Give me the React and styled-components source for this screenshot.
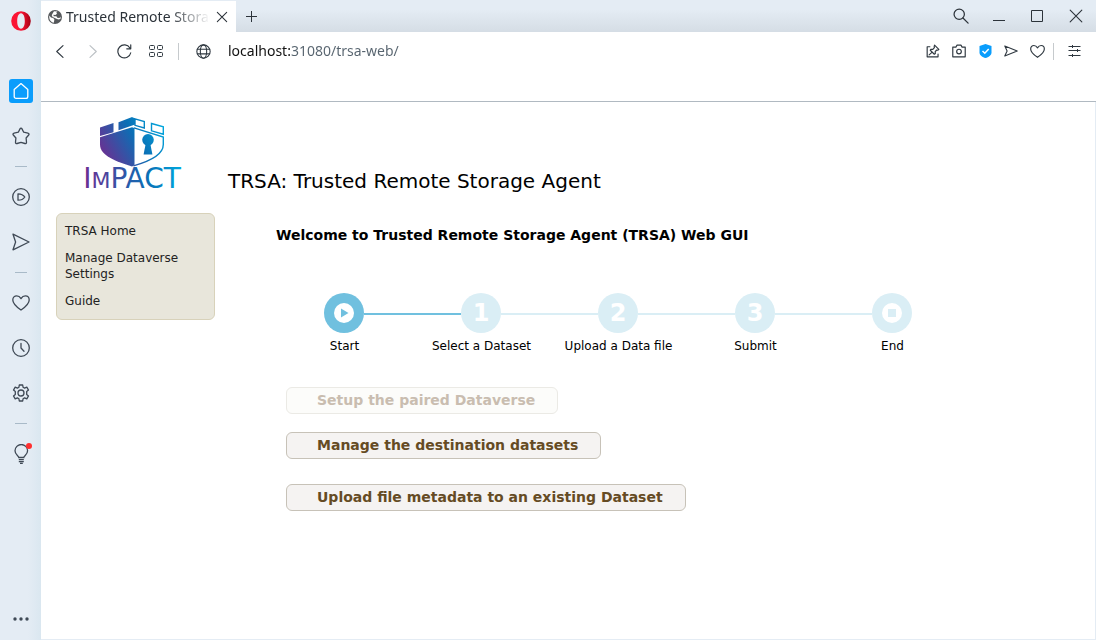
import React from 'react';
import styled, { createGlobalStyle } from 'styled-components';

const GlobalStyle = createGlobalStyle`
  *, *::before, *::after { box-sizing: border-box; }
  body {
    margin: 0;
    background: #ffffff;
    color: #000000;
    font-family: "DejaVu Sans", sans-serif;
    font-size: 12px;
  }
  button, input { font: inherit; color: inherit; }
`;

const chromeFont = '"Noto Sans", "Open Sans", sans-serif';

const Window = styled.div`
  display: flex;
  min-height: 100vh;
  background: #e4ecf4;
`;

const Sidebar = styled.nav`
  display: flex;
  flex: none;
  flex-direction: column;
  align-items: center;
  width: 41px;
  padding: 9px 0;
  background: linear-gradient(to right, #e4ecf4 28px, #dae7f0);
  color: #3f4955;
`;

const SideGroup = styled.div`
  display: flex;
  flex-direction: column;
  gap: 21px;
`;

const SideButton = styled.button`
  position: relative;
  display: grid;
  place-items: center;
  width: 24px;
  height: 24px;
  padding: 0;
  border: 0;
  border-radius: 3px;
  background: ${(p) => (p.$active ? '#0a9dfc' : 'transparent')};
  color: ${(p) => (p.$active ? '#ffffff' : 'inherit')};
`;

const OperaButton = styled(SideButton)`
  margin-bottom: 46px;
`;

const MoreButton = styled(SideButton)`
  margin-top: auto;
`;

const SideDivider = styled.hr`
  width: 12px;
  height: 1px;
  margin: 18px 0;
  border: 0;
  background: #a9bac8;
`;

const Alert = styled.span`
  position: absolute;
  top: 1px;
  right: 1px;
  width: 6px;
  height: 6px;
  border-radius: 50%;
  background: #ff2f2f;
`;

const Frame = styled.div`
  display: flex;
  flex: 1;
  flex-direction: column;
  min-width: 0;
`;

const TabBar = styled.div`
  display: flex;
  align-items: stretch;
  height: 32px;
  padding-top: 1px;
  padding-right: 1px;
  background: linear-gradient(#e4ecf4 30%, #d5dde5);
  color: #2c333a;
`;

const Tab = styled.div`
  display: flex;
  align-items: center;
  width: 195px;
  padding: 0 7px;
  background: #ffffff;
  font: 14px/20px ${chromeFont};
`;

const TabTitle = styled.span`
  flex: 1;
  min-width: 0;
  margin-left: 4px;
  overflow: hidden;
  white-space: nowrap;
  mask-image: linear-gradient(to right, #000 104px, transparent 144px);
`;

const BarButton = styled.button`
  display: grid;
  flex: none;
  place-items: center;
  width: ${(p) => p.$width || 26}px;
  height: 30px;
  padding: 0;
  border: 0;
  background: none;
  color: ${(p) => (p.$muted ? '#bcc1c5' : 'inherit')};
`;

const WindowControls = styled.div`
  display: flex;
  margin-left: auto;
`;

const Toolbar = styled.div`
  display: flex;
  align-items: center;
  height: 38px;
  padding: 0 9px 0 3px;
  background: #ffffff;
  color: #2f3840;
`;

const ToolbarDivider = styled.span`
  flex: none;
  width: 1px;
  height: 17px;
  margin: 0 ${(p) => p.$right}px 0 ${(p) => p.$left}px;
  background: #c6cacd;
`;

const Address = styled.input`
  flex: 1;
  min-width: 0;
  height: 24px;
  margin-left: 9px;
  padding: 0 0 2px;
  border: 0;
  outline: 0;
  font: 14px/20px ${chromeFont};
  color: #111111;
  background: linear-gradient(to right, #111111 62px, #56636e 62px);
  background-clip: text;
  -webkit-text-fill-color: transparent;
`;

const BookmarksBar = styled.div`
  height: 32px;
  border-bottom: 1px solid #b0b9c1;
  background: #ffffff;
`;

const Page = styled.div`
  flex: 1;
  margin: 0 1px 1px 0;
  padding: 15px;
  background: #ffffff;
`;

const PageHeader = styled.header`
  display: flex;
  align-items: flex-end;
  gap: 20px;
  margin-bottom: 24px;
`;

const LogoImage = styled.svg`
  flex: none;
  overflow: visible;
`;

const AppTitle = styled.h1`
  margin: 0 0 -4px;
  font-size: 20px;
  font-weight: 400;
  line-height: 24px;
`;

const Columns = styled.div`
  display: flex;
  align-items: flex-start;
  gap: 61px;
`;

const Menu = styled.ul`
  display: flex;
  flex: none;
  flex-direction: column;
  gap: 11px;
  width: 159px;
  margin: 0;
  padding: 9px 8px 10px;
  border: 1px solid #d8d2ba;
  border-radius: 6px;
  background: #e8e6db;
  list-style: none;
`;

const MenuLink = styled.a`
  display: block;
  color: #222222;
  line-height: 16px;
  text-decoration: none;
`;

const Main = styled.main`
  flex: 1;
  min-width: 0;
  padding-top: 12px;
`;

const Welcome = styled.h2`
  margin: 0 0 48px;
  font-size: 14px;
  font-weight: 700;
  line-height: 20px;
`;

const Steps = styled.ol`
  display: flex;
  margin: 0 0 33px;
  padding: 0;
  list-style: none;
`;

const Step = styled.li`
  flex: none;
  width: 137px;
`;

const StepTrack = styled.div`
  display: flex;
  align-items: center;
`;

const Line = styled.span`
  width: ${(p) => p.$width}px;
  height: 2px;
  margin-top: 2px;
  background: ${(p) => p.$color};
`;

const Bullet = styled.span`
  display: grid;
  place-items: center;
  width: 40px;
  height: 40px;
  border-radius: 50%;
  background: ${(p) => (p.$active ? '#70c0df' : '#daeef5')};
  color: #ffffff;
  font-size: 24px;
  font-weight: 700;
  line-height: 40px;
`;

const StepLabel = styled.div`
  margin-top: 5px;
  line-height: 16px;
  text-align: center;
`;

const Actions = styled.div`
  display: flex;
  flex-direction: column;
  align-items: flex-start;
  gap: 18px;
  padding-left: 10px;
`;

const ActionButton = styled.button`
  height: 27px;
  margin: 0;
  margin-top: ${(p) => (p.$spaced ? 7 : 0)}px;
  padding: 0 22px 1px 30px;
  border: 1px solid #c7c2b8;
  border-radius: 6px;
  background: #f5f3f2;
  color: #654b24;
  font-size: 14px;
  font-weight: 700;
  line-height: 20px;
  white-space: nowrap;

  &:disabled {
    border-color: #ebeae5;
    background: #fcfcfa;
    color: #c9bdb0;
  }
`;

function Icon({ size = 18, width = 1.3, children }) {
  return (
    <svg width={size} height={size} viewBox="0 0 18 18" fill="none" stroke="currentColor"
      strokeWidth={width} strokeLinejoin="round" strokeLinecap="round" aria-hidden="true">
      {children}
    </svg>
  );
}

const heart = 'M9 16C5 13.2.8 9.6.8 5.9.8 3.400 2.600 1.800 4.700 1.800 6.600 1.800 8 2.900 9 4.600 10 2.900 11.400 1.800 13.300 1.800 15.400 1.800 17.200 3.400 17.200 5.900 17.200 9.600 13 13.200 9 16Z';
const plane = 'M1 1.200 17 9 1 16.800 3.600 9Z';

function OperaLogo() {
  return (
    <svg width="20" height="20" viewBox="0 0 20 20" aria-hidden="true">
      <defs>
        <linearGradient id="opera" x1="0" x2="1">
          <stop offset="0.5" stopColor="#fb1434" />
          <stop offset="1" stopColor="#a50014" />
        </linearGradient>
      </defs>
      <path fill="url(#opera)" fillRule="evenodd" d="M10 .2a9.800 9.800 0 1 1 0 19.600 9.800 9.800 0 0 1 0-19.600ZM10 2.300C7.400 2.300 6.200 6 6.200 10S7.400 17.700 10 17.700 13.800 14 13.800 10 12.600 2.300 10 2.300Z" />
    </svg>
  );
}

function PageGlobe() {
  return (
    <svg width="14" height="14" viewBox="0 0 14 14" aria-hidden="true">
      <circle cx="7" cy="7" r="7" fill="#55585b" />
      <path fill="#ffffff" d="M1.300 5.500 3 7.400 5.200 8 6.400 9.600 5.800 12.800C2.900 12.300.8 9.400 1.300 5.500ZM6 1.200 9.500 1.600 8.300 2.600 9 3.700 7.400 4.900 5.400 4.700 5.700 6.200 8.300 6.300 9.700 7.900 12 7.800 12.900 6.500 12.400 9 10.300 9.400 7.300 8.300 4.400 6.800 3.700 5.200 4.900 3Z" />
    </svg>
  );
}

function ImpactLogo() {
  return (
    <LogoImage width="152" height="72" viewBox="0 0 152 72" role="img" aria-label="Impact">
      <defs>
        <linearGradient id="shield" gradientUnits="userSpaceOnUse" x1="48" y1="42" x2="108" y2="8">
          <stop offset="0" stopColor="#6b2f91" />
          <stop offset="0.55" stopColor="#0b6fb5" />
          <stop offset="1" stopColor="#00a9df" />
        </linearGradient>
        <linearGradient id="wordmark" gradientUnits="userSpaceOnUse" x1="28" y1="0" x2="126" y2="0">
          <stop offset="0" stopColor="#6b2f91" />
          <stop offset="0.65" stopColor="#0b6fb5" />
          <stop offset="1" stopColor="#00a9df" />
        </linearGradient>
      </defs>
      <g fill="url(#shield)">
        <path d="M44 10.500 57.500 6V15.200L44 19Z" />
        <path d="M62.500 5.300 75.500.3 79 1.600V7.600L75.500 8.800 62.500 13.200Z" />
        <path d="M44 20.300 76 10.200 78.500 11V48.300L76 49.500C60 44.500 44 38.500 44 27.500Z" />
        <circle cx="92" cy="22.800" r="5.800" />
        <path d="M90 25h4l2.400 12.400h-8.800Z" />
      </g>
      <g fill="none" stroke="url(#shield)" strokeWidth="1.400">
        <path d="M75.500.8 88.300 4.600V11L79 8.300V2.200" />
        <path d="M95.500 6.500 107.300 9.800V17.200L95.500 13.800Z" />
        <path d="M78 10.800 107.300 20V27.500C107.300 38 93 44.500 77.500 48.800" />
      </g>
      <text x="76" y="71" textAnchor="middle" fill="url(#wordmark)" fontFamily="DejaVu Sans, sans-serif" fontSize="28">
        I<tspan fontSize="22">M</tspan>PACT
      </text>
    </LogoImage>
  );
}

const steps = [
  { label: 'Start', mark: 'play' },
  { label: 'Select a Dataset', mark: '1' },
  { label: 'Upload a Data file', mark: '2' },
  { label: 'Submit', mark: '3' },
  { label: 'End', mark: 'stop' },
];

function StepMark({ mark }) {
  if (mark !== 'play' && mark !== 'stop') return mark;
  return (
    <svg width="20" height="20" viewBox="0 0 20 20" aria-hidden="true">
      <circle cx="10" cy="10" r="10" fill="#ffffff" />
      {mark === 'play'
        ? <path d="M7 5.500 14.500 10 7 14.500Z" fill="#70c0df" />
        : <path d="M6 6h8v8H6Z" fill="#daeef5" />}
    </svg>
  );
}

function Stepper({ current }) {
  const color = (i) => {
    if (i < 0 || i >= steps.length - 1) return 'transparent';
    return i <= current ? '#70c0df' : '#daeef5';
  };
  return (
    <Steps>
      {steps.map((step, i) => (
        <Step key={step.label}>
          <StepTrack>
            <Line $width={48} $color={color(i - 1)} />
            <Bullet $active={i === current}><StepMark mark={step.mark} /></Bullet>
            <Line $width={49} $color={color(i)} />
          </StepTrack>
          <StepLabel>{step.label}</StepLabel>
        </Step>
      ))}
    </Steps>
  );
}

function BrowserSidebar() {
  return (
    <Sidebar aria-label="Browser sidebar">
      <OperaButton aria-label="Opera menu"><OperaLogo /></OperaButton>
      <SideGroup>
        <SideButton $active aria-label="Home">
          <Icon><path d="M2.200 7.400 9 1.600l6.800 5.800v7c0 1-.8 1.900-1.900 1.900H4.100c-1.100 0-1.900-.9-1.900-1.900Z" /></Icon>
        </SideButton>
        <SideButton aria-label="Bookmarks">
          <Icon><path d="M9 1.200c.5 0 .8.300 1 .7l1.700 3.300 4.200.9c1 .2 1.500 1.100.8 1.900l-2.600 3 .4 4.300c.1 1-.8 1.500-1.600 1.200L9 15.400l-3.900 1.100c-.8.300-1.700-.2-1.600-1.200l.4-4.300-2.600-3c-.7-.8-.2-1.700.8-1.900l4.200-.9L8 1.900c.2-.4.5-.7 1-.7Z" /></Icon>
        </SideButton>
      </SideGroup>
      <SideDivider />
      <SideGroup>
        <SideButton aria-label="Player">
          <Icon><circle cx="9" cy="9" r="8.300" /><path d="M6 5.800v6.400c2.800 0 5.600-1.300 6.800-3.200C11.600 7.100 8.800 5.800 6 5.800Z" /></Icon>
        </SideButton>
        <SideButton aria-label="Flow"><Icon><path d={plane} /></Icon></SideButton>
      </SideGroup>
      <SideDivider />
      <SideGroup>
        <SideButton aria-label="Favourites"><Icon><path d={heart} /></Icon></SideButton>
        <SideButton aria-label="History">
          <Icon><circle cx="9" cy="9" r="8.300" /><path d="M9 4.500V9l3 3.200" /></Icon>
        </SideButton>
        <SideButton aria-label="Settings">
          <Icon>
            <circle cx="9" cy="9" r="3" />
            <path d="M7.300 1h3.400l.4 2.300 1.500.8 2.200-.9 1.700 2.900-1.800 1.400v3l1.800 1.400-1.700 2.900-2.200-.9-1.500.8-.4 2.300H7.300l-.4-2.300-1.500-.8-2.200.9-1.700-2.900 1.800-1.400v-3L1.500 6.100l1.700-2.900 2.200.9 1.500-.8Z" />
          </Icon>
        </SideButton>
      </SideGroup>
      <SideDivider />
      <SideButton aria-label="Tips">
        <svg width="18" height="20" viewBox="0 0 18 20" fill="none" stroke="currentColor" strokeWidth="1.300" aria-hidden="true">
          <path d="M6.800 13.500c0-1.500-3.800-2.700-3.800-6.700a6.300 6.300 0 0 1 12.600 0c0 4-3.800 5.200-3.800 6.700ZM6.800 15.700h5M6.800 17.700h5M8 19.500h2.800" />
        </svg>
        <Alert />
      </SideButton>
      <MoreButton aria-label="More">
        <svg width="18" height="6" viewBox="0 0 18 6" fill="currentColor" aria-hidden="true">
          <circle cx="3" cy="3" r="1.700" /><circle cx="9" cy="3" r="1.700" /><circle cx="15" cy="3" r="1.700" />
        </svg>
      </MoreButton>
    </Sidebar>
  );
}

function BrowserTabs() {
  return (
    <TabBar>
      <Tab>
        <PageGlobe />
        <TabTitle>Trusted Remote Storage Agent</TabTitle>
        <BarButton $width={14} aria-label="Close tab"><Icon size={12} width={1.600}><path d="M2 2 16 16M16 2 2 16" /></Icon></BarButton>
      </Tab>
      <BarButton $width={31} aria-label="New tab">
        <svg width="11" height="11" aria-hidden="true"><path d="M5.500 0v11M0 5.500h11" stroke="currentColor" /></svg>
      </BarButton>
      <WindowControls>
        <BarButton $width={39} aria-label="Search tabs"><Icon size={16} width={1.400}><circle cx="7" cy="7" r="5.800" /><path d="M11.200 11.200 17 17" /></Icon></BarButton>
        <BarButton $width={38} aria-label="Minimise">
          <svg width="12" height="12" aria-hidden="true"><path d="M0 10.500h12" stroke="currentColor" /></svg>
        </BarButton>
        <BarButton $width={38} aria-label="Maximise">
          <svg width="12" height="12" aria-hidden="true"><path d="M.5.5h11v11H.5Z" fill="none" stroke="currentColor" /></svg>
        </BarButton>
        <BarButton $width={39} aria-label="Close window"><Icon size={14} width={1.400}><path d="M1.500 1.500 16.500 16.500M16.500 1.500 1.500 16.500" /></Icon></BarButton>
      </WindowControls>
    </TabBar>
  );
}

function BrowserToolbar() {
  return (
    <Toolbar>
      <BarButton $width={32} aria-label="Back"><Icon size={15} width={1.400}><path d="M12 2 4.500 9 12 16" /></Icon></BarButton>
      <BarButton $width={32} $muted aria-label="Forward"><Icon size={15} width={1.400}><path d="M6 2 13.500 9 6 16" /></Icon></BarButton>
      <BarButton $width={32} aria-label="Reload"><Icon size={15} width={1.400}><path d="M16.500 10.500A7.800 7.800 0 1 1 15.500 4.800M16.500 1v4.800h-4.800" /></Icon></BarButton>
      <BarButton $width={32} aria-label="Tab overview">
        <svg width="14" height="12" viewBox="0 0 14 12" fill="none" stroke="currentColor" aria-hidden="true">
          <rect x=".5" y=".5" width="5" height="4" rx="1" /><rect x="8.500" y=".5" width="5" height="4" rx="1" />
          <rect x=".5" y="7.500" width="5" height="4" rx="1" /><rect x="8.500" y="7.500" width="5" height="4" rx="1" />
        </svg>
      </BarButton>
      <ToolbarDivider $left={6} $right={8} />
      <BarButton $width={32} aria-label="Site information">
        <Icon size={15} width={1.300}><circle cx="9" cy="9" r="8" /><ellipse cx="9" cy="9" rx="3.800" ry="8" /><path d="M1.600 6.200h14.800M1.600 11.800h14.800" /></Icon>
      </BarButton>
      <Address aria-label="Address" defaultValue="localhost:31080/trsa-web/" />
      <BarButton aria-label="Pin">
        <Icon size={14} width={1.500}><path d="M5 3.500H1.500v13h14V13M11 1.500l5.500 5.500-1.500 1-1.200-.3-2 2.200.2 2.300-1.300 1L5.500 8l1-1.300 2.300.2 2-2.200-.3-1.200ZM8 10.500 4 14" /></Icon>
      </BarButton>
      <BarButton aria-label="Snapshot">
        <Icon size={14} width={1.500}><path d="M1 4h4l1.500-2.500h5L13 4h4v12.500H1Z" /><circle cx="9" cy="9.800" r="3" /></Icon>
      </BarButton>
      <BarButton aria-label="Ad blocker">
        <svg width="13" height="14" viewBox="0 0 13 14" aria-hidden="true">
          <path d="M6.500 0 12.500 2v6.500c0 2.800-3 4.700-6 5.500-3-.8-6-2.700-6-5.500V2Z" fill="#0a9dfc" />
          <path d="M3.500 7 5.800 9.200 9.700 5" fill="none" stroke="#ffffff" strokeWidth="1.500" />
        </svg>
      </BarButton>
      <BarButton aria-label="Send to Flow"><Icon size={14} width={1.400}><path d="M1 2.500 17 9 1 15.500 4 9Z" /></Icon></BarButton>
      <BarButton aria-label="Add to bookmarks"><Icon size={15} width={1.400}><path d={heart} /></Icon></BarButton>
      <ToolbarDivider $left={3} $right={7} />
      <BarButton aria-label="Easy setup">
        <svg width="13" height="12" viewBox="0 0 13 12" stroke="currentColor" aria-hidden="true">
          <path d="M.5 1.500h12M.5 5.500h12M.5 10.500h12M4.500 0v3M9.500 4v3M4.500 9v3" />
        </svg>
      </BarButton>
    </Toolbar>
  );
}

export default function App() {
  return (
    <Window>
      <GlobalStyle />
      <BrowserSidebar />
      <Frame>
        <BrowserTabs />
        <BrowserToolbar />
        <BookmarksBar />
        <Page>
          <PageHeader>
            <ImpactLogo />
            <AppTitle>TRSA: Trusted Remote Storage Agent</AppTitle>
          </PageHeader>
          <Columns>
            <Menu>
              <li><MenuLink href="#home">TRSA Home</MenuLink></li>
              <li><MenuLink href="#settings">Manage Dataverse Settings</MenuLink></li>
              <li><MenuLink href="#guide">Guide</MenuLink></li>
            </Menu>
            <Main>
              <Welcome>Welcome to Trusted Remote Storage Agent (TRSA) Web GUI</Welcome>
              <Stepper current={0} />
              <Actions>
                <ActionButton disabled>Setup the paired Dataverse</ActionButton>
                <ActionButton>Manage the destination datasets</ActionButton>
                <ActionButton $spaced>Upload file metadata to an existing Dataset</ActionButton>
              </Actions>
            </Main>
          </Columns>
        </Page>
      </Frame>
    </Window>
  );
}
